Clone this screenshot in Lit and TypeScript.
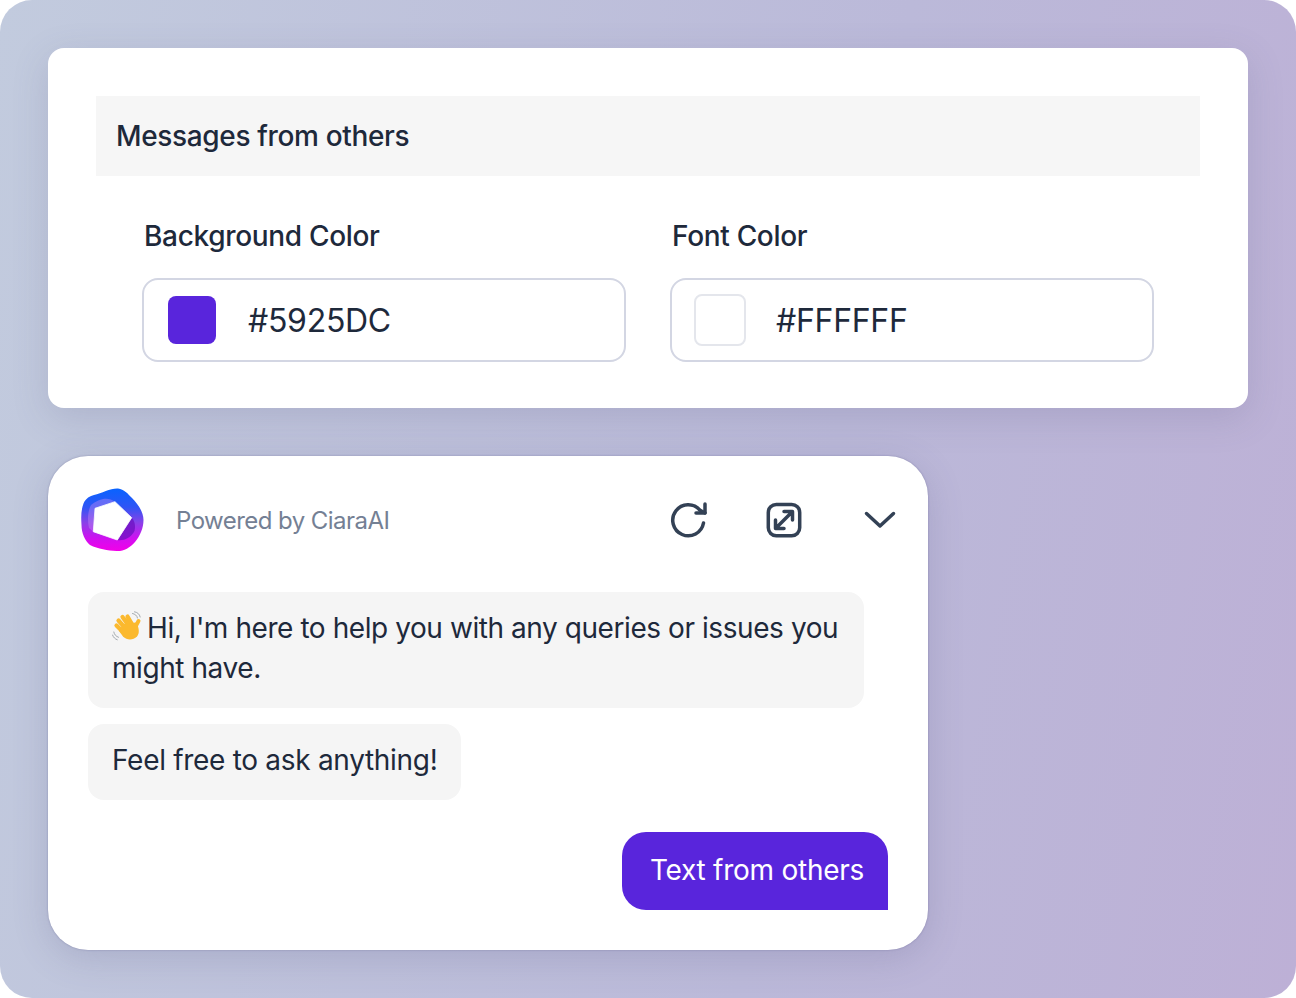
import { LitElement, html, css } from 'lit';
import { customElement } from 'lit/decorators.js';

@customElement('app-root')
export class AppRoot extends LitElement {
  static styles = css`
    :host {
      display: block;
      width: 1296px;
      height: 998px;
      font-family: Inter, 'Liberation Sans', sans-serif;
      color: #1e293b;
    }

    .page {
      box-sizing: border-box;
      width: 1296px;
      height: 998px;
      padding: 48px;
      border-radius: 32px;
      background: linear-gradient(100deg, #c2cbde 0%, #bbb9d9 62%, #bdb0d6 100%);
      display: flex;
      flex-direction: column;
      gap: 48px;
    }

    .settings {
      box-sizing: border-box;
      width: 1200px;
      height: 360px;
      padding: 48px;
      background: #fff;
      border-radius: 16px;
      box-shadow: 0 10px 36px rgba(90, 90, 125, 0.18);
    }

    .section-head {
      height: 80px;
      padding-left: 20px;
      background: #f6f6f6;
      font-size: 28px;
      font-weight: 500;
      line-height: 80px;
      letter-spacing: -0.35px;
    }

    .fields {
      display: flex;
      gap: 44px;
      padding: 40px 0 0 46px;
    }

    .field {
      width: 484px;
    }

    .field label {
      display: block;
      padding-left: 2px;
      font-size: 28px;
      font-weight: 500;
      line-height: 40px;
      letter-spacing: -0.32px;
      margin-bottom: 22px;
    }

    .input {
      box-sizing: border-box;
      height: 84px;
      display: flex;
      align-items: center;
      gap: 32px;
      padding-left: 24px;
      border: 2px solid #d3d6e3;
      border-radius: 16px;
      font-size: 32px;
      letter-spacing: -0.3px;
    }

    .swatch {
      box-sizing: border-box;
      width: 48px;
      height: 48px;
      border-radius: 8px;
      background: #5925dc;
    }

    .swatch.white {
      width: 52px;
      height: 52px;
      margin: 0 -2px;
      background: #fff;
      border: 2px solid #e4e6ec;
    }

    .chat {
      box-sizing: border-box;
      width: 880px;
      height: 494px;
      padding: 0 40px;
      background: #fff;
      border-radius: 40px;
      box-shadow: 0 0 2px rgba(80, 80, 130, 0.45), 0 8px 36px rgba(80, 80, 125, 0.2);
      display: flex;
      flex-direction: column;
      align-items: flex-start;
    }

    .chat-head {
      box-sizing: border-box;
      width: 100%;
      height: 136px;
      padding-bottom: 8px;
      display: flex;
      align-items: center;
    }

    .logo {
      width: 68px;
      height: 68px;
      margin-left: -10px;
      flex: none;
    }

    .powered {
      margin-left: 30px;
      font-size: 24px;
      letter-spacing: -0.55px;
      color: #748094;
      flex: 1;
    }

    .tools {
      display: flex;
      gap: 48px;
      margin-right: -16px;
    }

    .tools svg {
      display: block;
      width: 48px;
      height: 48px;
      fill: none;
      stroke: #334155;
      stroke-width: 3.5;
      stroke-linecap: round;
      stroke-linejoin: round;
    }

    .bubble {
      box-sizing: border-box;
      height: 76px;
      padding: 16px 24px;
      background: #f5f5f5;
      border-radius: 16px;
      font-size: 28px;
      line-height: 40px;
      letter-spacing: -0.3px;
    }

    .bubble.first {
      width: 776px;
      height: 116px;
      padding-right: 20px;
      margin-bottom: 16px;
      letter-spacing: -0.43px;
    }

    .wave {
      display: inline-block;
      width: 32px;
      height: 32px;
      vertical-align: -5px;
      margin-right: 3px;
    }

    .outgoing {
      box-sizing: border-box;
      align-self: flex-end;
      width: 266px;
      height: 78px;
      margin: 32px 0 0;
      padding-left: 4px;
      background: #5925dc;
      color: #fff;
      border-radius: 24px 24px 0 24px;
      font-size: 28px;
      line-height: 77px;
      letter-spacing: -0.25px;
      text-align: center;
    }
  `;

  render() {
    return html`
      <div class="page">
        <section class="settings">
          <div class="section-head">Messages from others</div>
          <div class="fields">
            <div class="field">
              <label>Background Color</label>
              <div class="input"><span class="swatch"></span>#5925DC</div>
            </div>
            <div class="field">
              <label>Font Color</label>
              <div class="input"><span class="swatch white"></span>#FFFFFF</div>
            </div>
          </div>
        </section>

        <section class="chat">
          <header class="chat-head">
            <svg class="logo" viewBox="0 0 68 68">
              <defs>
                <linearGradient id="ring" x1="0.5" y1="0" x2="0.5" y2="1">
                  <stop offset="0" stop-color="#0863ff" />
                  <stop offset="0.3" stop-color="#2f55f5" />
                  <stop offset="0.55" stop-color="#8a40e8" />
                  <stop offset="0.8" stop-color="#d010f0" />
                  <stop offset="1" stop-color="#f200e8" />
                </linearGradient>
              </defs>
              <path
                fill="url(#ring)"
                d="M40 2.500C46 3 50 8 54 12C60 18 65.500 26 65.500 34C65.500 42 62 50 57 56C52 62 45 65.500 38.500 65C30 64.500 20 63 12 59C7 55 3.500 47 3.500 39C3 31 3 24 5.500 17.500C8 12 12 10 16 9C24 7 33 2 40 2.500Z"
              />
              <path fill="#c78cf5" opacity="0.4" d="M37 15.700L17 22.300L15.300 45.700L11 42C9 34 10 24 13 19C20 13 30 10 37 15.700Z" />
              <path fill="#6c10c0" opacity="0.75" d="M53.700 31.700L39.300 54C46 55 52 52 56 46C58 41 57 35 53.700 31.700Z" />
              <path
                fill="#fff"
                stroke="#fff"
                stroke-width="0.800"
                stroke-linejoin="round"
                d="M37 15.700L53.700 31.700L39.300 54L15.300 45.700L17 22.300Z"
              />
            </svg>
            <span class="powered">Powered by CiaraAI</span>
            <div class="tools">
              <svg viewBox="0 0 48 48">
                <path d="M39.500 27a15.500 15.500 0 1 1-3.400-12.700L41 17" />
                <path d="M41 8v9h-9" />
              </svg>
              <svg viewBox="0 0 48 48">
                <rect x="8.300" y="8.400" width="31.400" height="31.400" rx="8" />
                <path d="M16 32L32 16M24 15.500H32.500V24M15.500 24V32.500H24" />
              </svg>
              <svg viewBox="0 0 48 48">
                <path d="M10.500 17.500L24 30L37.500 17.500" />
              </svg>
            </div>
          </header>

          <div class="bubble first">
            <svg class="wave" viewBox="0 0 32 32">
              <g fill="none" stroke="#fbb92e" stroke-linecap="round">
                <path stroke-width="4.200" d="M12 22L4.500 14.500M14 18L6.500 9.500M17 15L10.500 6M20.500 14L15.500 5.500" />
                <path stroke-width="4" d="M23 18C23.500 15 25 12.500 26.500 10" />
              </g>
              <path fill="#fbb92e" d="M11 13L24 11.500C27 16 28 22 25 25.500C21 29.500 15 29.500 11 25.500L7 20Z" />
              <g fill="none" stroke="#9aa0a6" stroke-width="0.900" stroke-linecap="round">
                <path d="M20.500 2.500C23 3 25 4.500 25.500 7M22.500 0.800C25.500 1.300 27.500 3 28.200 6" />
                <path d="M1.800 21C2.300 23.500 4 25.500 6.500 26.300M0.500 24C1.500 26.500 3 28 5.300 28.800" />
              </g>
            </svg>Hi, I'm here to help you with any queries or issues you might have.
          </div>
          <div class="bubble">Feel free to ask anything!</div>
          <div class="outgoing">Text from others</div>
        </section>
      </div>
    `;
  }
}
